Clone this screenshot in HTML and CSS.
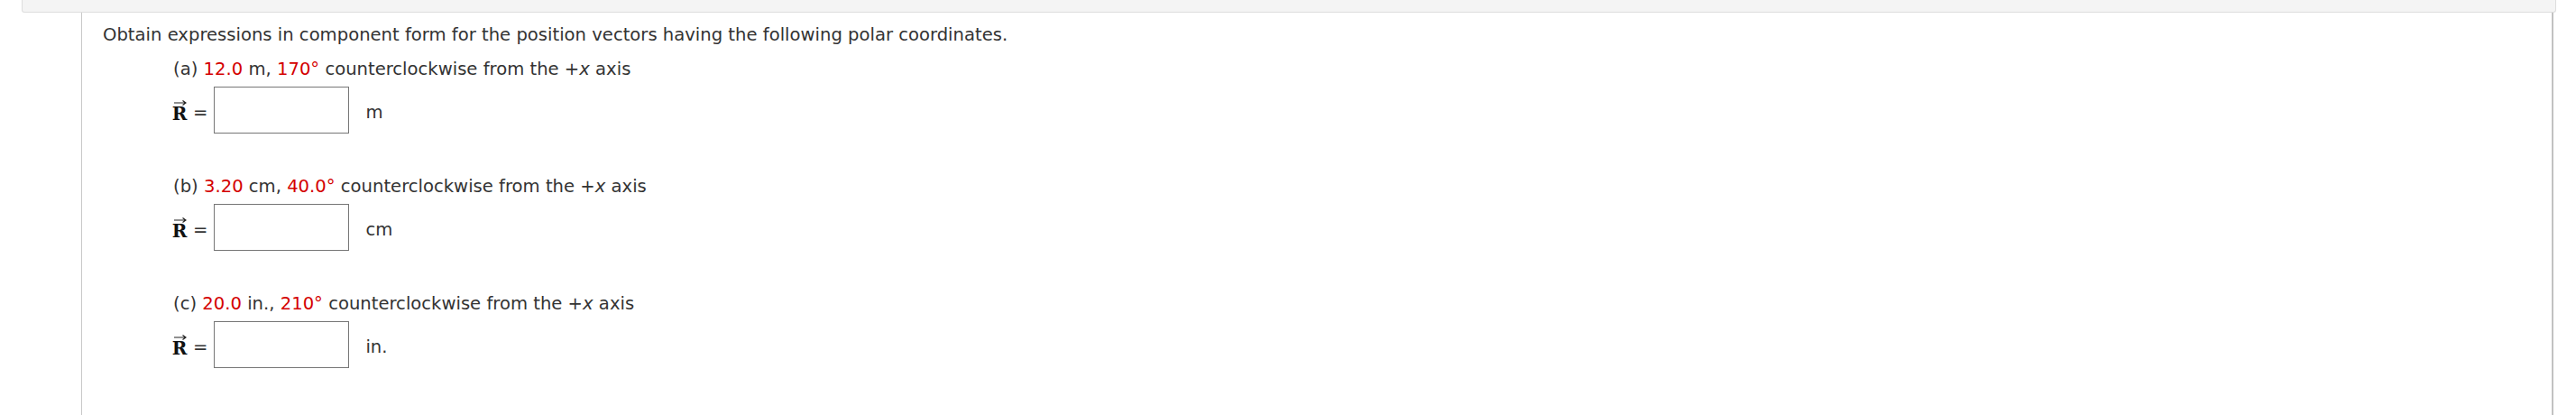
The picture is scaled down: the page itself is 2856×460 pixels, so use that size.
FILE: index.html
```html
<!DOCTYPE html>
<html>
<head>
<meta charset="utf-8">
<link rel="stylesheet" href="styles.css">
</head>
<body>
<div class="topbar"></div>
<div class="panel">
  <p class="prompt">Obtain expressions in component form for the position vectors having the following polar coordinates.</p>
  <div class="part">
    <p class="label">(a) <span class="red">12.0</span> m, <span class="red">170°</span> counterclockwise from the +<i>x</i> axis</p>
    <div class="answer">
      <span class="vec"><svg class="arrow" width="15" height="6" viewBox="0 0 15 6"><path d="M1 3H13.5M10.5 0.6L14 3L10.5 5.4" fill="none" stroke="#222" stroke-width="1.2"/></svg><span class="R">R</span></span>
      <span class="eq">=</span>
      <span class="box"></span>
      <span class="unit">m</span>
    </div>
  </div>
  <div class="part">
    <p class="label">(b) <span class="red">3.20</span> cm, <span class="red">40.0°</span> counterclockwise from the +<i>x</i> axis</p>
    <div class="answer">
      <span class="vec"><svg class="arrow" width="15" height="6" viewBox="0 0 15 6"><path d="M1 3H13.5M10.5 0.6L14 3L10.5 5.4" fill="none" stroke="#222" stroke-width="1.2"/></svg><span class="R">R</span></span>
      <span class="eq">=</span>
      <span class="box"></span>
      <span class="unit">cm</span>
    </div>
  </div>
  <div class="part">
    <p class="label">(c) <span class="red">20.0</span> in., <span class="red">210°</span> counterclockwise from the +<i>x</i> axis</p>
    <div class="answer">
      <span class="vec"><svg class="arrow" width="15" height="6" viewBox="0 0 15 6"><path d="M1 3H13.5M10.5 0.6L14 3L10.5 5.4" fill="none" stroke="#222" stroke-width="1.2"/></svg><span class="R">R</span></span>
      <span class="eq">=</span>
      <span class="box"></span>
      <span class="unit">in.</span>
    </div>
  </div>
</div>
</body>
</html>
```
FILE: styles.css
```css
html, body {
  margin: 0;
  padding: 0;
  background: #ffffff;
}
body {
  font-family: "DejaVu Sans", Verdana, sans-serif;
  font-size: 19.6px;
  line-height: 23px;
  color: #333333;
}
.topbar {
  margin-left: 24px;
  width: 2808px;
  height: 13px;
  background: #f4f4f4;
  border: 1px solid #dddddd;
  border-top: none;
  border-radius: 0 0 3px 3px;
}
.panel {
  margin-left: 90px;
  width: 2741px;
  height: 446px;
  border-left: 1px solid #c8c8c8;
  border-right: 2px solid #c2c2c2;
  padding: 13px 0 0 23px;
  box-sizing: border-box;
  overflow: hidden;
}
.prompt {
  margin: 0 0 15px 0;
}
.part {
  margin-left: 78px;
  margin-bottom: 47px;
}
.label {
  margin: 0 0 8px 0;
}
.label i {
  font-style: italic;
}
.red {
  color: #d40000;
}
.answer {
  display: flex;
  align-items: center;
  height: 52px;
}
.vec {
  display: flex;
  flex-direction: column;
  align-items: center;
  margin-left: -1px;
  width: 16px;
  margin-top: 2px;
}
.arrow {
  display: block;
  margin-bottom: 0;
}
.R {
  font-family: "DejaVu Serif", "Liberation Serif", serif;
  font-weight: bold;
  font-size: 20px;
  line-height: 19px;
  color: #111;
}
.eq {
  margin-left: 7px;
  margin-right: 7px;
  margin-top: 5px;
}
.box {
  width: 148px;
  height: 50px;
  border: 1px solid #767676;
  background: #fff;
}
.unit {
  margin-left: 18px;
  margin-top: 4px;
}
```
